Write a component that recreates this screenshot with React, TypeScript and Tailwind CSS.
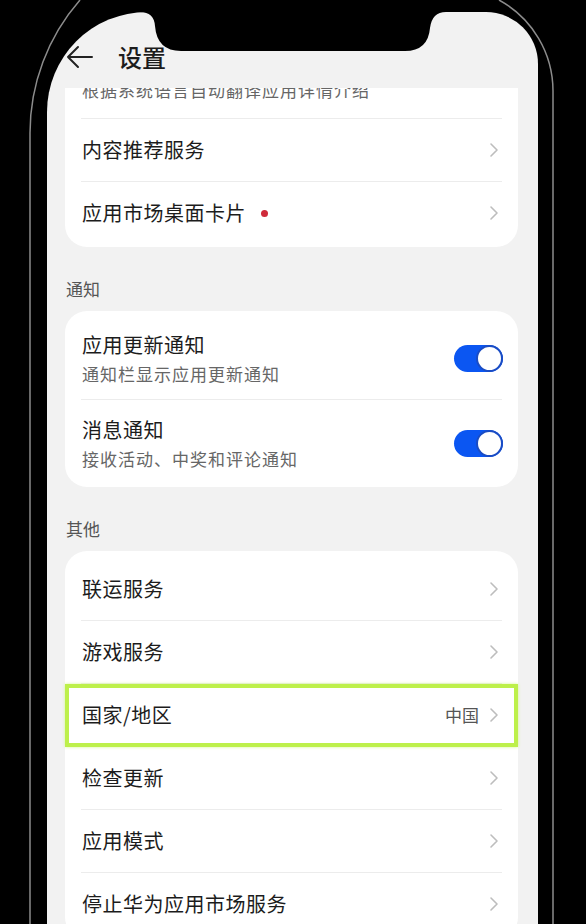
import React from 'react'

// Settings page inside a phone frame

const Chevron = () => (
  <svg width="10" height="16" viewBox="0 0 10 16" className="shrink-0">
    <path d="M2 2 L8 8 L2 14" fill="none" stroke="#bdbdbd" strokeWidth="1.6" strokeLinecap="round" strokeLinejoin="round" />
  </svg>
)

const Toggle = () => (
  <div className="relative w-[49px] h-[27px] rounded-full bg-[#0b56f2] shrink-0">
    <div className="absolute right-0 top-0 w-[27px] h-[27px] rounded-full bg-white border-[2px] border-[#1a4cc4]" />
  </div>
)

const Divider = () => <div className="mx-[16px] h-px bg-[#ececec]" />

const LinkRow = ({ title, value, dot }: { title: string; value?: string; dot?: boolean }) => (
  <div className="h-[62px] px-[17px] flex items-center">
    <span className="text-[20px] leading-[28px] tracking-[0.5px] text-[#1c1c1c]">{title}</span>
    {dot && <span className="ml-[15px] w-[7px] h-[7px] rounded-full bg-[#cf2a3a]" />}
    <div className="flex-1" />
    {value && <span className="mr-[10px] text-[17px] text-[#555]">{value}</span>}
    <div className="mr-[2px]">
      <Chevron />
    </div>
  </div>
)

const SwitchRow = ({ title, desc }: { title: string; desc: string }) => (
  <div className="h-[84px] pl-[17px] pr-[15px] pt-[16px] flex items-start">
    <div className="flex-1 flex flex-col">
      <span className="text-[20px] leading-[28px] tracking-[0.5px] text-[#1c1c1c]">{title}</span>
      <span className="mt-[3px] text-[17px] leading-[24px] tracking-[1px] text-[#666]">{desc}</span>
    </div>
    <div className="mt-[14px]">
      <Toggle />
    </div>
  </div>
)

const SectionLabel = ({ text }: { text: string }) => (
  <div className="pt-[30px] pb-[10px] pl-[1px] text-[17px] leading-[24px] text-[#555]">{text}</div>
)

export default function App() {
  return (
    <div className="relative w-[586px] h-[924px] overflow-hidden bg-black pl-[47px] pt-[12px] font-['Noto_Sans_CJK_SC','Noto_Sans',sans-serif]">
      {/* screen */}
      <div className="w-[491px] h-[912px] bg-[#f2f2f2] rounded-tl-[100px] rounded-tr-[52px] overflow-hidden flex flex-col">
        {/* header */}
        <div className="h-[76px] shrink-0 flex items-start pt-[33px]">
          <svg width="28" height="24" viewBox="0 0 28 24" className="ml-[19px]">
            <path d="M26 12 H2 M12 2 L2 12 L12 22" fill="none" stroke="#222" strokeWidth="2" strokeLinecap="round" strokeLinejoin="round" />
          </svg>
          <span className="ml-[24px] text-[24px] leading-[24px] font-medium text-[#1c1c1c]">设置</span>
        </div>

        {/* content, scrolled so the first row sits under the header */}
        <div className="flex-1 overflow-hidden pl-[18px] pr-[20px]">
          <div className="mt-[-58px] bg-white rounded-[22px] pt-[4px] pb-[3px]">
            <div className="h-[84px] px-[17px] pt-[44px]">
              <span className="block text-[17px] leading-[24px] tracking-[1px] text-[#666]">根据系统语言自动翻译应用详情介绍</span>
            </div>
            <Divider />
            <LinkRow title="内容推荐服务" />
            <Divider />
            <LinkRow title="应用市场桌面卡片" dot />
          </div>

          <SectionLabel text="通知" />
          <div className="bg-white rounded-[22px] pt-[4px] pb-[3px]">
            <SwitchRow title="应用更新通知" desc="通知栏显示应用更新通知" />
            <Divider />
            <SwitchRow title="消息通知" desc="接收活动、中奖和评论通知" />
          </div>

          <SectionLabel text="其他" />
          <div className="bg-white rounded-[22px] pt-[7px] pb-[4px]">
            <LinkRow title="联运服务" />
            <Divider />
            <LinkRow title="游戏服务" />
            <Divider />
            <div className="relative">
              <LinkRow title="国家/地区" value="中国" />
              <div className="absolute inset-x-0 top-[0px] bottom-[-1px] border-[4px] border-[#bdf04a] shadow-[0_0_3px_#d6f78f]" />
            </div>
            <Divider />
            <LinkRow title="检查更新" />
            <Divider />
            <LinkRow title="应用模式" />
            <Divider />
            <LinkRow title="停止华为应用市场服务" />
          </div>
        </div>
      </div>

      {/* notch */}
      <svg className="absolute left-0 top-0" width="586" height="60" viewBox="0 0 586 60">
        <path d="M140 0 V12 Q154 12 155 26 Q157 51 181 51 H405 Q428 51 430 28 Q432 12 446 12 V0 Z" fill="#000" />
      </svg>

      {/* frame outline */}
      <svg className="absolute left-0 top-0" width="586" height="924" viewBox="0 0 586 924">
        <path d="M30 924 V133 A202 202 0 0 1 80 0" fill="none" stroke="#8c8c8c" strokeWidth="1.5" />
        <path d="M499 0 A104 104 0 0 1 553 91 V924" fill="none" stroke="#8c8c8c" strokeWidth="1.5" />
      </svg>
    </div>
  )
}
